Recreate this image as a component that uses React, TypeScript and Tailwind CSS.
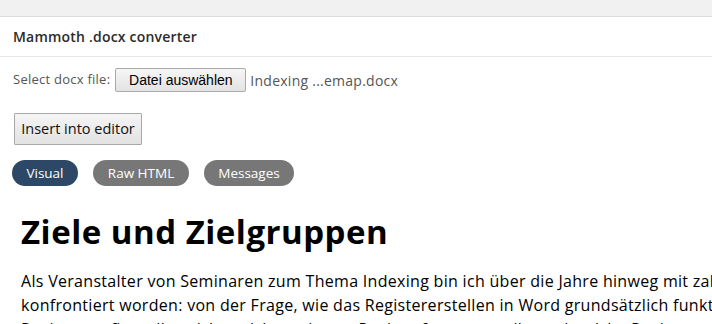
import React from "react";

export default function App() {
  return (
    <div className="w-[712px] h-[324px] overflow-hidden bg-white font-['Open_Sans',sans-serif]">
      <div className="h-[17px] bg-[#f1f1f1] border-b border-[#dcdcdc]" />
      <div className="h-[40px] flex items-center px-[13px] border-b border-[#e6e6e6] text-[14px] tracking-[0.2px] font-semibold text-[#2b2b2b]">
        Mammoth .docx converter
      </div>
      <div className="flex items-center h-[24px] mt-[11px] pl-[13px] whitespace-nowrap">
        <span className="text-[13px] tracking-[0.25px] text-[#555]">Select docx file:</span>
        <button className="ml-[5px] h-[24px] w-[131px] border border-[#a9a9a9] rounded-[2px] bg-gradient-to-b from-[#f6f6f6] to-[#e3e3e3] text-[14px] text-black font-['Liberation_Sans',sans-serif]">
          Datei auswählen
        </button>
        <span className="ml-[4px] text-[14px] tracking-[0.25px] text-[#555]">Indexing ...emap.docx</span>
      </div>
      <div className="mt-[21px] pl-[14px]">
        <button className="h-[32px] w-[128px] border border-[#a9a9a9] rounded-[1px] bg-gradient-to-b from-[#f5f5f5] to-[#e2e2e2] text-[14.5px] text-[#111]">
          Insert into editor
        </button>
      </div>
      <div className="flex mt-[15px] pl-[12px] gap-[15px] text-[13.5px] text-white">
        <span className="h-[26px] w-[66px] rounded-full bg-[#2c4866] flex items-center justify-center">Visual</span>
        <span className="h-[26px] w-[96px] rounded-full bg-[#777777] flex items-center justify-center">Raw HTML</span>
        <span className="h-[26px] w-[90px] rounded-full bg-[#777777] flex items-center justify-center">Messages</span>
      </div>
      <div className="pl-[21px] mt-[26px] w-[900px]">
        <h1 className="text-[33px] tracking-[0.5px] font-bold leading-[40px] text-black">Ziele und Zielgruppen</h1>
        <p className="mt-[17px] text-[16px] tracking-[0.3px] leading-[24px] text-black">
          Als Veranstalter von Seminaren zum Thema Indexing bin ich über die Jahre hinweg mit zahlreichen Fragen
          <br />
          konfrontiert worden: von der Frage, wie das Registererstellen in Word grundsätzlich funktioniert,
          <br />
          Registerprofis stellen sich, welche weiteren Registerformen es gibt und welche Register wo benötigt werden.
        </p>
      </div>
    </div>
  );
}
